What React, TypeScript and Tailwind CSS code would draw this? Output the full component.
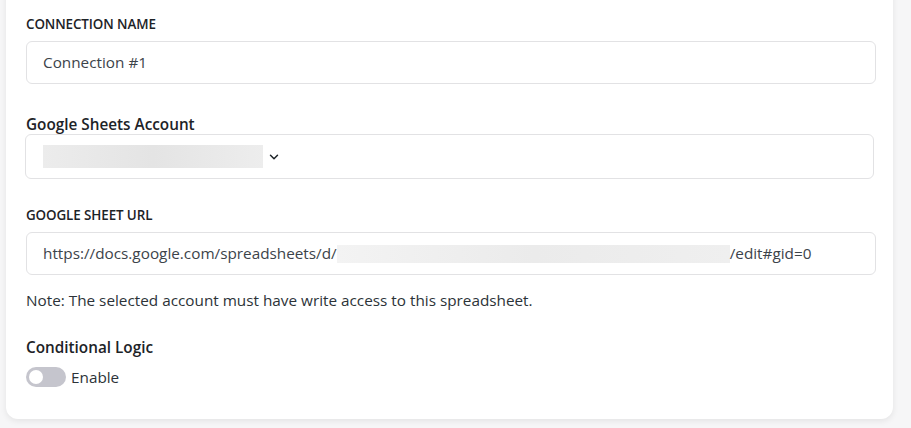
import { ChevronDown } from 'lucide-react'

export default function App() {
  return (
    <div className="h-[428px] w-[911px] overflow-hidden bg-[#f6f6f7] pl-[6px] pr-[18px] font-['Open_Sans',sans-serif] text-[#1d2327]">
      <div className="-mt-[12px] rounded-b-[12px] border-t border-[#e4e4e7] bg-white pb-[32px] pl-[20px] pr-[17px] pt-[12px] shadow-[0_2px_6px_rgba(0,0,0,0.08)]">
        {/* Connection name */}
        <div className="pt-[14px]">
          <label className="block text-[13.4px] font-semibold leading-[18px] tracking-[-0.1px]">CONNECTION NAME</label>
          <div className="mt-[8px] flex h-[43px] items-center rounded-[6px] border border-[#e2e2e4] px-[16px] text-[15.3px] text-[#3c434a]">
            Connection #1
          </div>
        </div>

        {/* Account */}
        <div className="mt-[30px]">
          <label className="block text-[15.3px] font-semibold leading-[20px]">Google Sheets Account</label>
          <div className="-ml-px mr-[2px] flex h-[45px] items-center rounded-[6px] border border-[#e2e2e4] pl-[17px]">
            <div className="h-[23px] w-[220px] bg-gradient-to-r from-[#ececec] via-[#e4e4e4] to-[#ededed]" />
            <ChevronDown className="ml-[4px] h-[14px] w-[14px] text-[#1d2327]" strokeWidth={2.5} />
          </div>
        </div>

        {/* URL */}
        <div className="mt-[27px]">
          <label className="block text-[13.4px] font-semibold leading-[18px] tracking-[-0.1px]">GOOGLE SHEET URL</label>
          <div className="mt-[8px] flex h-[43px] items-center rounded-[6px] border border-[#e2e2e4] px-[16px] text-[15.3px] text-[#3c434a]">
            <span>https://docs.google.com/spreadsheets/d/</span>
            <span className="h-[18px] w-[393px] bg-gradient-to-r from-[#f3f3f3] via-[#ebebeb] to-[#efefef]" />
            <span>/edit#gid=0</span>
          </div>
          <p className="mt-[15px] text-[15.3px] leading-[20px] text-[#2c3338]">
            Note: The selected account must have write access to this spreadsheet.
          </p>
        </div>

        {/* Conditional logic */}
        <div className="mt-[27px]">
          <label className="block text-[15.3px] font-semibold leading-[20px]">Conditional Logic</label>
          <div className="mt-[10px] flex items-center gap-[5px]">
            <span className="relative inline-block h-[20px] w-[40px] rounded-full bg-[#c5c5cd]">
              <span className="absolute left-[3px] top-[3px] h-[14px] w-[14px] rounded-full bg-white" />
            </span>
            <span className="text-[15.3px] leading-[20px] text-[#2c3338]">Enable</span>
          </div>
        </div>
      </div>
    </div>
  )
}
